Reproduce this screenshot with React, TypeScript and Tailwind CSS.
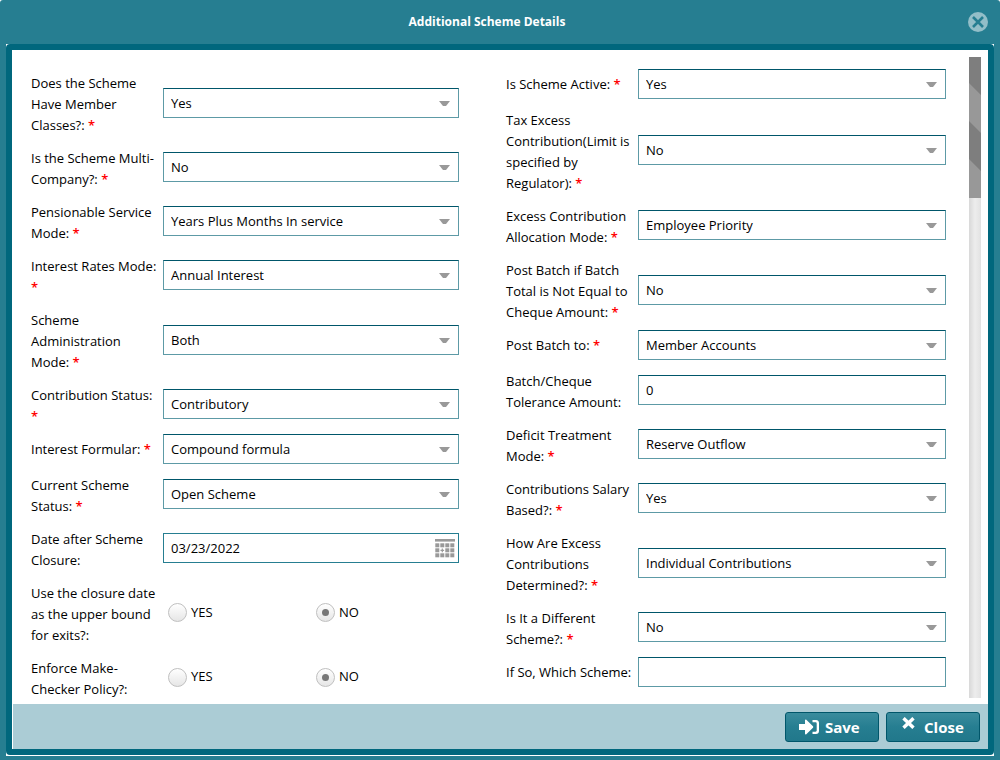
import { useId } from "react";

type Field = {
  label: string;
  required?: boolean;
  kind: "select" | "text" | "date" | "radio";
  value: string;
};

const left: Field[] = [
  { label: "Does the Scheme Have Member Classes?:", required: true, kind: "select", value: "Yes" },
  { label: "Is the Scheme Multi-Company?:", required: true, kind: "select", value: "No" },
  { label: "Pensionable Service Mode:", required: true, kind: "select", value: "Years Plus Months In service" },
  { label: "Interest Rates Mode:", required: true, kind: "select", value: "Annual Interest" },
  { label: "Scheme Administration Mode:", required: true, kind: "select", value: "Both" },
  { label: "Contribution Status:", required: true, kind: "select", value: "Contributory" },
  { label: "Interest Formular:", required: true, kind: "select", value: "Compound formula" },
  { label: "Current Scheme Status:", required: true, kind: "select", value: "Open Scheme" },
  { label: "Date after Scheme Closure:", kind: "date", value: "03/23/2022" },
  { label: "Use the closure date as the upper bound for exits?:", kind: "radio", value: "NO" },
  { label: "Enforce Make-Checker Policy?:", kind: "radio", value: "NO" },
];

const right: Field[] = [
  { label: "Is Scheme Active:", required: true, kind: "select", value: "Yes" },
  { label: "Tax Excess Contribution(Limit is specified by Regulator):", required: true, kind: "select", value: "No" },
  { label: "Excess Contribution Allocation Mode:", required: true, kind: "select", value: "Employee Priority" },
  { label: "Post Batch if Batch Total is Not Equal to Cheque Amount:", required: true, kind: "select", value: "No" },
  { label: "Post Batch to:", required: true, kind: "select", value: "Member Accounts" },
  { label: "Batch/Cheque Tolerance Amount:", kind: "text", value: "0" },
  { label: "Deficit Treatment Mode:", required: true, kind: "select", value: "Reserve Outflow" },
  { label: "Contributions Salary Based?:", required: true, kind: "select", value: "Yes" },
  { label: "How Are Excess Contributions Determined?:", required: true, kind: "select", value: "Individual Contributions" },
  { label: "Is It a Different Scheme?:", required: true, kind: "select", value: "No" },
  { label: "If So, Which Scheme:", kind: "text", value: "" },
];

const boxClass =
  "block h-[30px] w-full appearance-none rounded-none border border-[#5d9aa6] border-t-[#00566a] bg-white px-[7px] text-[13px] text-black outline-none";

function CalendarIcon() {
  const cells: [number, number][] = [];
  for (let r = 0; r < 3; r++) for (let c = 0; c < 4; c++) if (!(r === 1 && c === 1)) cells.push([c, r]);
  return (
    <svg width="20" height="19" viewBox="0 0 20 19" fill="#999999" aria-hidden="true">
      <rect x="0" y="0" width="20" height="2.6" />
      {cells.map(([c, r]) => (
        <rect key={`${c}-${r}`} x={c * 5 + 0.3} y={r * 5 + 4.3} width="4" height="4" />
      ))}
      <path d="M6.700 9.600h1.200v1.200h1.200v1.200H7.900v1.200H6.700V12H5.500v-1.200h1.200z" />
    </svg>
  );
}

function Control({ field, id }: { field: Field; id: string }) {
  if (field.kind === "select") {
    return (
      <div className="relative">
        <select id={id} defaultValue={field.value} className={`${boxClass} pt-0.5`}>
          <option>{field.value}</option>
        </select>
        <svg
          className="pointer-events-none absolute top-[13px] right-[9px]"
          width="11"
          height="6"
          viewBox="0 0 11 6"
          aria-hidden="true"
        >
          <path d="M0 0h11L7 5H4z" fill="#999999" />
        </svg>
      </div>
    );
  }
  if (field.kind === "date") {
    return (
      <div className="flex h-[30px] items-center border border-[#267e91] bg-white pr-[3px]">
        <input
          id={id}
          type="text"
          defaultValue={field.value}
          className="min-w-0 flex-1 bg-transparent px-[7px] pt-0.5 text-[13px] text-black outline-none"
        />
        <button type="button" aria-label="Choose date">
          <CalendarIcon />
        </button>
      </div>
    );
  }
  if (field.kind === "radio") {
    return (
      <div role="radiogroup" aria-labelledby={id} className="grid h-[30px] grid-cols-2 items-center">
        {["YES", "NO"].map((option) => (
          <label key={option} className="flex items-center gap-1 pl-[5px]">
            <input
              type="radio"
              name={id}
              defaultChecked={option === field.value}
              className="flex size-[19px] shrink-0 appearance-none items-center justify-center rounded-full border border-[#c0c0c0] bg-linear-to-b from-white to-[#e6e6e6] before:size-[7px] before:rounded-full checked:before:bg-[#777777]"
            />
            {option}
          </label>
        ))}
      </div>
    );
  }
  return <input id={id} type="text" defaultValue={field.value} className={boxClass} />;
}

function Row({ field }: { field: Field }) {
  const id = useId();
  const text = (
    <>
      {field.label}
      {field.required && " "}
      {field.required && <span className="font-semibold text-[#ff0000]">*</span>}
    </>
  );
  const labelClass = "w-32 shrink-0 py-1.5 leading-[21px]";
  return (
    <div className="flex gap-1">
      {field.kind === "radio" ? (
        <span id={id} className={labelClass}>
          {text}
        </span>
      ) : (
        <label htmlFor={id} className={labelClass}>
          {text}
        </label>
      )}
      <div className="min-w-0 flex-1 self-center pt-px pb-[5px]">
        <Control field={field} id={id} />
      </div>
    </div>
  );
}

const actionClass =
  "flex h-[30px] w-[94px] rounded-[3px] border border-[#00566a] bg-linear-to-b from-[#3a8c9d] via-[#267e91] to-[#21788b] text-[15px] font-bold text-white";

export default function App() {
  return (
    <div className="h-screen bg-white font-['Open_Sans','Noto_Sans',sans-serif] text-[13px] text-black">
      <div role="dialog" aria-labelledby="dialog-title" className="flex h-full flex-col rounded-t-[3px] bg-[#267e91] px-1.5 pb-1">
        <header className="flex h-11 shrink-0 items-center">
          <h1 id="dialog-title" className="flex-1 text-center text-xs font-bold text-white">
            Additional Scheme Details
          </h1>
          <button type="button" aria-label="Close dialog" className="mr-1.5">
            <svg width="20" height="20" viewBox="0 0 20 20" aria-hidden="true">
              <circle cx="10" cy="10" r="10" fill="#93bec8" />
              <path d="M5 5l10 10M15 5L5 15" stroke="#267e91" strokeWidth="2.600" />
            </svg>
          </button>
        </header>
        <div className="flex min-h-0 flex-1 flex-col bg-white pb-px">
          <div className="flex min-h-0 flex-1 flex-col rounded border-[6px] border-[#00677d] bg-white">
            <main className="flex min-h-0 flex-1">
              <form className="grid min-w-0 flex-1 grid-cols-[428fr_440fr] items-start gap-x-[47px] overflow-y-auto pt-[17px] pr-[23px] pl-[19px] [scrollbar-width:none]">
                <div>
                  {left.map((field) => (
                    <Row key={field.label} field={field} />
                  ))}
                </div>
                <div className="pt-px">
                  {right.map((field) => (
                    <Row key={field.label} field={field} />
                  ))}
                </div>
              </form>
              <div className="mt-[7px] mr-[7px] mb-1.5 w-3 shrink-0 bg-linear-to-r from-[#d8d8d8] via-[#ededed] to-[#e2e2e2]">
                <svg className="block h-[22%] w-full bg-[#989898]" viewBox="0 0 12 141" preserveAspectRatio="none" aria-hidden="true">
                  <path d="M0 0h12v38L0 26zM0 64l12 12v38L0 102z" fill="#7e7e7e" />
                </svg>
              </div>
            </main>
            <footer className="ml-px flex h-[45px] shrink-0 justify-end gap-[7px] bg-[#abccd5] pt-2 pr-2">
              <button type="button" className={`${actionClass} items-center pl-[13px]`}>
                <svg className="mr-1.5" width="20" height="16" viewBox="0 0 20 16" fill="#ffffff" aria-hidden="true">
                  <path d="M0 5h6V1.200c0-.7.800-1 1.300-.5l6.700 6.600c.4.400.4 1 0 1.400l-6.700 6.600c-.5.500-1.300.2-1.300-.5V11H0z" />
                  <path d="M13.500 1H17c1.800 0 3 1.200 3 3v8c0 1.800-1.200 3-3 3h-3.500v-2.300h3c.7 0 1.200-.4 1.200-1.100V4.400c0-.7-.5-1.100-1.200-1.100h-3z" />
                </svg>
                Save
              </button>
              <button type="button" className={`${actionClass} items-center pl-[15px]`}>
                <svg className="mt-1 mr-[9px] self-start" width="13" height="12" viewBox="0 0 13 12" aria-hidden="true">
                  <path d="M1.500 1.200l10 9.600M11.500 1.200l-10 9.600" stroke="#ffffff" strokeWidth="3.400" />
                </svg>
                Close
              </button>
            </footer>
          </div>
        </div>
      </div>
    </div>
  );
}
